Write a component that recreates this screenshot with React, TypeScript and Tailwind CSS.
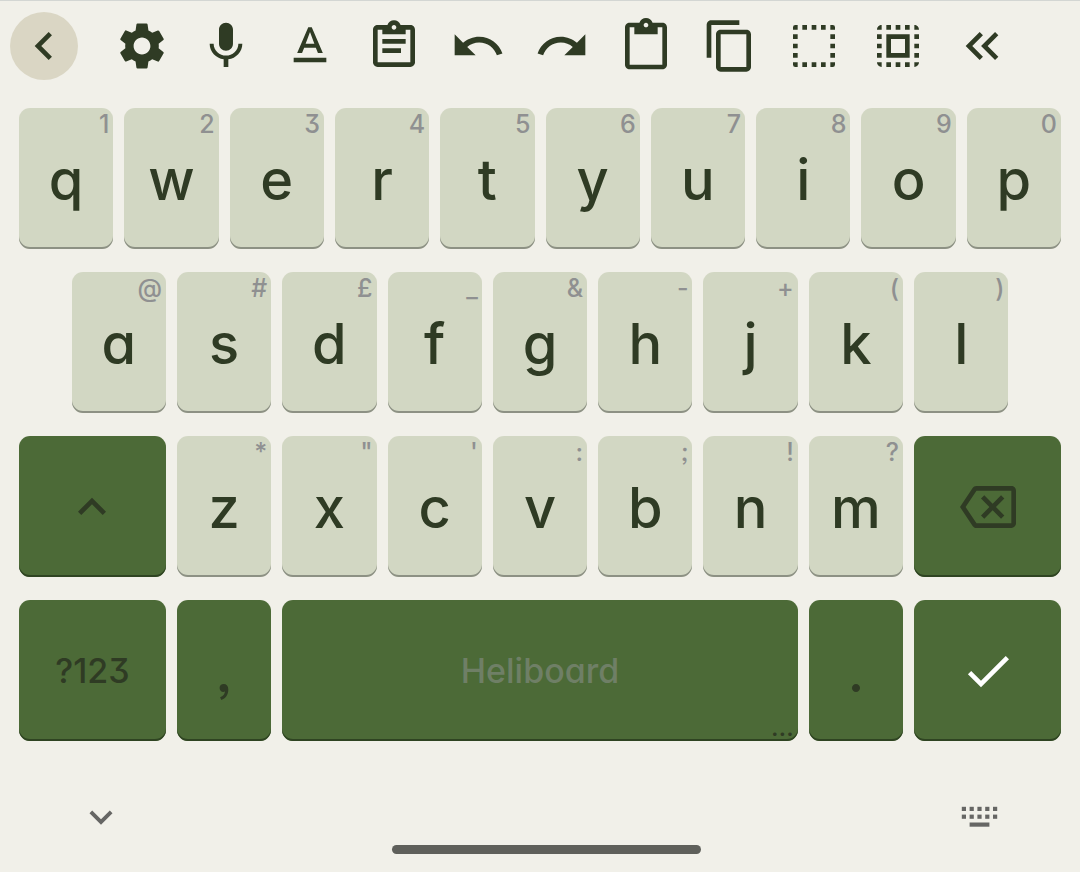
import type { ReactNode } from "react";

const ICONS = {
  back: "M15.41 7.41 14 6l-6 6 6 6 1.41-1.41L10.83 12z",
  settings:
    "M19.14 12.94c.04-.3.06-.61.06-.94 0-.32-.02-.64-.07-.94l2.03-1.58c.18-.14.23-.41.12-.61l-1.92-3.32c-.12-.22-.37-.29-.59-.22l-2.39.96c-.5-.38-1.03-.7-1.62-.94l-.36-2.54c-.04-.24-.24-.41-.48-.41h-3.84c-.24 0-.43.17-.47.41l-.36 2.54c-.59.24-1.13.57-1.62.94l-2.39-.96c-.22-.08-.47 0-.59.22L2.74 8.87c-.12.21-.08.47.12.61l2.03 1.58c-.05.3-.09.63-.09.94s.02.64.07.94l-2.03 1.58c-.18.14-.23.41-.12.61l1.92 3.32c.12.22.37.29.59.22l2.39-.96c.5.38 1.03.7 1.62.94l.36 2.54c.05.24.24.41.48.41h3.84c.24 0 .44-.17.47-.41l.36-2.54c.59-.24 1.13-.56 1.62-.94l2.39.96c.22.08.47 0 .59-.22l1.92-3.32c.12-.22.07-.47-.12-.61l-2.01-1.58zM12 15.6c-1.98 0-3.6-1.62-3.6-3.6s1.62-3.6 3.6-3.6 3.6 1.62 3.6 3.6-1.62 3.6-3.6 3.6z",
  mic: "M12 14c1.66 0 2.99-1.34 2.99-3L15 5c0-1.66-1.34-3-3-3S9 3.34 9 5v6c0 1.66 1.34 3 3 3zm5.3-3c0 3-2.54 5.1-5.3 5.1S6.7 14 6.7 11H5c0 3.41 2.72 6.23 6 6.72V21h2v-3.28c3.28-.48 6-3.3 6-6.72h-1.7z",
  format:
    "M5 17v2h14v-2H5zm4.5-4.2h5l.9 2.2h2.1L12.75 4h-1.5L6.5 15h2.1l.9-2.2zM12 5.98L13.87 11h-3.74L12 5.98z",
  clipboard:
    "M19 3h-4.18C14.4 1.84 13.3 1 12 1c-1.3 0-2.4.84-2.82 2H5c-1.1 0-2 .9-2 2v14c0 1.1.9 2 2 2h14c1.1 0 2-.9 2-2V5c0-1.1-.9-2-2-2zm-7 0c.55 0 1 .45 1 1s-.45 1-1 1-1-.45-1-1 .45-1 1-1zm7 16H5V5h2v2h10V5h2v14zM7 9h10v2H7zM7 13h8v2H7z",
  undo: "M12.5 8c-2.65 0-5.05.99-6.9 2.6L2 7v9h9l-3.62-3.62c1.39-1.16 3.16-1.88 5.12-1.88 3.54 0 6.55 2.31 7.6 5.5l2.37-.78C21.08 11.03 17.15 8 12.5 8z",
  redo: "M18.4 10.6C16.55 8.99 14.15 8 11.5 8c-4.65 0-8.58 3.03-9.96 7.22L3.9 16c1.05-3.19 4.05-5.5 7.6-5.5 1.95 0 3.73.72 5.12 1.88L13 16h9V7l-3.6 3.6z",
  paste:
    "M19 2h-4.18C14.4.84 13.3 0 12 0c-1.3 0-2.4.84-2.82 2H5c-1.1 0-2 .9-2 2v16c0 1.1.9 2 2 2h14c1.1 0 2-.9 2-2V4c0-1.1-.9-2-2-2zm-7 0c.55 0 1 .45 1 1s-.45 1-1 1-1-.45-1-1 .45-1 1-1zm7 18H5V4h2v3h10V4h2v16z",
  copy: "M16 1H4c-1.1 0-2 .9-2 2v14h2V3h12V1zm3 4H8c-1.1 0-2 .9-2 2v14c0 1.1.9 2 2 2h11c1.1 0 2-.9 2-2V7c0-1.1-.9-2-2-2zm0 16H8V7h11v14z",
  selectWord:
    "M3 5h2V3H4a1 1 0 0 0-1 1zM7 3h2v2H7zM11 3h2v2h-2zM15 3h2v2h-2zM19 3v2h2V4a1 1 0 0 0-1-1zM3 7h2v2H3zM3 11h2v2H3zM3 15h2v2H3zM19 7h2v2h-2zM19 11h2v2h-2zM19 15h2v2h-2zM3 19v1a1 1 0 0 0 1 1h1v-2zM7 19h2v2H7zM11 19h2v2h-2zM15 19h2v2h-2zM19 19v2h1a1 1 0 0 0 1-1v-1z",
  selectAll:
    "M3 5h2V3c-1.1 0-2 .9-2 2zm0 8h2v-2H3v2zm4 8h2v-2H7v2zM3 9h2V7H3v2zm10-6h-2v2h2V3zm6 0v2h2c0-1.1-.9-2-2-2zM5 21v-2H3c0 1.1.9 2 2 2zm-2-4h2v-2H3v2zM9 3H7v2h2V3zm2 18h2v-2h-2v2zm8-8h2v-2h-2v2zm0 8c1.1 0 2-.9 2-2h-2v2zm0-12h2V7h-2v2zm0 8h2v-2h-2v2zm-4 4h2v-2h-2v2zm0-16h2V3h-2v2zM7 17h10V7H7v10zm2-8h6v6H9V9z",
  wordLeft:
    "M17.59 18 19 16.59 14.42 12 19 7.41 17.59 6l-6 6zM11 18l1.41-1.41L7.83 12l4.58-4.59L11 6l-6 6z",
  shift: "M12 8l-6 6 1.41 1.41L12 10.83l4.59 4.58L18 14z",
  backspace:
    "M22 3H7c-.69 0-1.23.35-1.59.88L0 12l5.41 8.11c.36.53.9.89 1.59.89h15c1.1 0 2-.9 2-2V5c0-1.1-.9-2-2-2zm0 16H7.07L2.4 12l4.66-7H22v14zm-11.59-2L14 13.41 17.59 17 19 15.59 15.41 12 19 8.41 17.59 7 14 10.59 10.41 7 9 8.41 12.59 12 9 15.59z",
  done: "M9 16.2L4.8 12l-1.4 1.4L9 19 21 7l-1.4-1.4L9 16.2z",
  down: "M7.41 8.59L12 13.17l4.59-4.58L18 10l-6 6-6-6z",
};

type IconName = keyof typeof ICONS;

function Icon({ name, className = "size-14" }: { name: IconName; className?: string }) {
  return (
    <svg viewBox="0 0 24 24" className={className} fill="currentColor" aria-hidden="true">
      <path d={ICONS[name]} />
    </svg>
  );
}

const TOOLS: { icon: IconName; label: string }[] = [
  { icon: "settings", label: "Settings" },
  { icon: "mic", label: "Voice input" },
  { icon: "format", label: "Text format" },
  { icon: "clipboard", label: "Clipboard" },
  { icon: "undo", label: "Undo" },
  { icon: "redo", label: "Redo" },
  { icon: "paste", label: "Paste" },
  { icon: "copy", label: "Copy" },
  { icon: "selectWord", label: "Select word" },
  { icon: "selectAll", label: "Select all" },
  { icon: "wordLeft", label: "Word left" },
];

const ROW_1 = ["q1", "w2", "e3", "r4", "t5", "y6", "u7", "i8", "o9", "p0"];
const ROW_2 = ["a@", "s#", "d£", "f_", "g&", "h-", "j+", "k(", "l)"];
const ROW_3 = ["z*", 'x"', "c'", "v:", "b;", "n!", "m?"];

function LetterKey({ pair, className = "" }: { pair: string; className?: string }) {
  return (
    <button
      type="button"
      className={`relative col-span-2 flex h-[141px] items-center justify-center rounded-[11px] bg-[#d2d7c3] pt-[2px] text-[56px] leading-none font-medium shadow-[inset_0_-2px_0_#8d9184] ${className}`}
    >
      {pair[0]}
      <span className="absolute top-1 right-1 text-[25px] leading-6 text-[#8f9091]">{pair[1]}</span>
    </button>
  );
}

function ActionKey({
  label,
  className,
  children,
}: {
  label: string;
  className: string;
  children: ReactNode;
}) {
  return (
    <button
      type="button"
      aria-label={label}
      className={`relative flex h-[141px] items-center justify-center rounded-[11px] bg-[#4c6a37] leading-none font-medium shadow-[inset_0_-2px_0_#2f4422] ${className}`}
    >
      {children}
    </button>
  );
}

export default function App() {
  return (
    <main className="flex min-h-screen flex-col border-t border-[#d3d6d3] bg-[#f1f0e9] font-['Inter','Lato',sans-serif] text-[#2f3b24] [font-feature-settings:'cv11','cv09','ss03']">
      <div className="flex items-center pt-[11px] pr-14 pl-[10px]">
        <button
          type="button"
          aria-label="Back"
          className="mr-[22px] flex size-[68px] items-center justify-center rounded-full bg-[#dad6c4]"
        >
          <Icon name="back" />
        </button>
        {TOOLS.map((tool) => (
          <button
            key={tool.icon}
            type="button"
            aria-label={tool.label}
            className="flex flex-1 items-center justify-center"
          >
            <Icon name={tool.icon} />
          </button>
        ))}
      </div>

      <div className="mt-7 grid grid-cols-20 gap-x-[11px] gap-y-[23px] px-[19px]">
        {ROW_1.map((pair) => (
          <LetterKey key={pair} pair={pair} />
        ))}

        {ROW_2.map((pair, i) => (
          <LetterKey key={pair} pair={pair} className={i === 0 ? "col-start-2" : ""} />
        ))}

        <ActionKey label="Shift" className="col-span-3 col-start-1">
          <Icon name="shift" />
        </ActionKey>
        {ROW_3.map((pair) => (
          <LetterKey key={pair} pair={pair} />
        ))}
        <ActionKey label="Delete" className="col-span-3">
          <Icon name="backspace" />
        </ActionKey>

        <ActionKey label="?123" className="col-span-3 text-[34px]">
          ?123
        </ActionKey>
        <ActionKey label="," className="col-span-2 pt-[2px] text-[56px]">
          ,
        </ActionKey>
        <ActionKey label="Heliboard" className="col-span-10 text-[34px] text-[#6f7f66]">
          Heliboard
          <span className="absolute right-1 bottom-[2px] text-[25px] leading-6 text-[#2f3b24]">
            …
          </span>
        </ActionKey>
        <ActionKey label="." className="col-span-2 pt-[2px] text-[56px]">
          .
        </ActionKey>
        <ActionKey label="Done" className="col-span-3 text-white">
          <Icon name="done" />
        </ActionKey>
      </div>

      <nav className="mt-[53px] flex items-center justify-between pr-[82px] pl-[78px] text-[#666664]">
        <button type="button" aria-label="Hide keyboard">
          <Icon name="down" className="size-[46px]" />
        </button>
        <button type="button" aria-label="Switch keyboard">
          <svg width="37" height="22" viewBox="0 0 37 22" fill="currentColor" aria-hidden="true">
            {[0, 1, 2, 3, 4].map((i) => (
              <g key={i}>
                <rect x={0.8 + i * 7.8} y="0.8" width="4.2" height="4.2" />
                <rect x={0.8 + i * 7.8} y="8.6" width="4.2" height="4.2" />
              </g>
            ))}
            <rect x="8.6" y="16.5" width="19.8" height="4.2" />
          </svg>
        </button>
      </nav>
      <div className="mt-[5px] flex justify-center pl-3">
        <div className="h-[9px] w-[309px] rounded-full bg-[#5f605b]" />
      </div>
    </main>
  );
}
